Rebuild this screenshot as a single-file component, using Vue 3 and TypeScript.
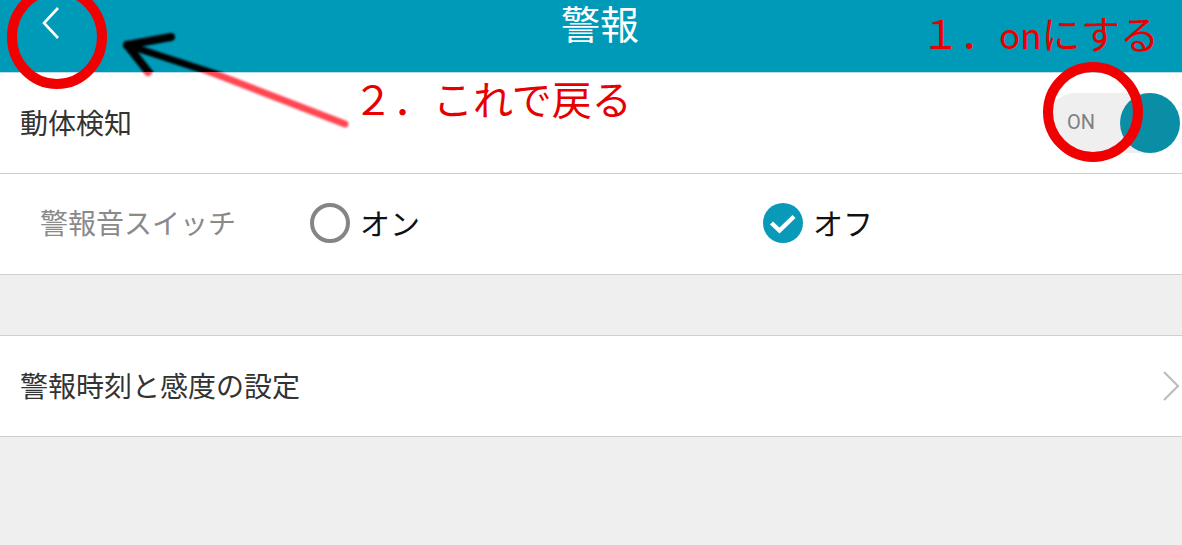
<script setup lang="ts">
const rows = { alarm: '警報音スイッチ' }
</script>

<template>
  <div class="page">
    <header class="bar">
      <svg class="back" width="22" height="34" viewBox="0 0 22 34">
        <path d="M18 2 L4 17 L18 32" fill="none" stroke="#fff" stroke-width="2.6" />
      </svg>
      <h1 class="title">警報</h1>
    </header>

    <section class="row first">
      <span class="label">動体検知</span>
      <div class="toggle">
        <span class="track">ON</span>
        <span class="knob"></span>
      </div>
    </section>

    <section class="row sound">
      <span class="sub">{{ rows.alarm }}</span>
      <div class="options">
        <label class="option">
          <span class="radio"></span>
          <span class="opt-text">オン</span>
        </label>
        <label class="option">
          <svg class="checked" width="40" height="40" viewBox="0 0 40 40">
            <circle cx="20" cy="20" r="20" fill="#0a9ab9" />
            <path d="M8.5 20 L16.5 27.5 L31 13.5" fill="none" stroke="#fff" stroke-width="4.4" />
          </svg>
          <span class="opt-text">オフ</span>
        </label>
      </div>
    </section>

    <section class="row link">
      <span class="label">警報時刻と感度の設定</span>
      <svg class="chev" width="20" height="32" viewBox="0 0 20 32">
        <path d="M3 2 L17 16 L3 30" fill="none" stroke="#bdbdbd" stroke-width="2.2" />
      </svg>
    </section>

    <!-- hand-drawn annotations laid over the screenshot -->
    <svg class="marks" width="1182" height="545" viewBox="0 0 1182 545">
      <defs>
        <filter id="soft" x="-10%" y="-30%" width="120%" height="160%">
          <feGaussianBlur stdDeviation="1" />
        </filter>
        <clipPath id="on-bar"><rect x="0" y="0" width="1182" height="72" /></clipPath>
        <clipPath id="below-bar"><rect x="0" y="72" width="1182" height="473" /></clipPath>
      </defs>
      <ellipse cx="57" cy="37" rx="45" ry="47" fill="none" stroke="#f00000" stroke-width="10" />
      <ellipse cx="1093" cy="112" rx="45" ry="45" fill="none" stroke="#f00000" stroke-width="10" />
      <g clip-path="url(#below-bar)">
        <g fill="none" stroke="#ff3040" stroke-linecap="round" filter="url(#soft)" opacity="0.9">
          <path d="M345 124 L200 68" stroke-width="7" />
          <path d="M140 62 L148 72" stroke-width="8" />
        </g>
      </g>
      <g clip-path="url(#on-bar)">
        <g fill="none" stroke="#050505" stroke-linecap="round" filter="url(#soft)">
          <path d="M222 76 L127 45" stroke-width="7" />
          <path d="M127 45 L171 37" stroke-width="8" />
          <path d="M127 45 L150 74" stroke-width="8" />
        </g>
      </g>
    </svg>
    <span class="note note-one">１．<span class="latin">on</span>にする</span>
    <span class="note note-two">２．これで戻る</span>
  </div>
</template>

<style>
html, body { margin: 0; background: #efefef; }
</style>

<style scoped>
.page {
  position: relative;
  width: 1182px;
  height: 545px;
  overflow: hidden;
  background: #efefef;
  font-family: "Noto Sans CJK JP", "Noto Sans", sans-serif;
}
.bar {
  height: 73px;
  box-sizing: border-box;
  padding-left: 18px;
  background: #009ab9;
  border-bottom: 1px solid #b8dfe8;
  position: relative;
  text-align: center;
}
.back { position: absolute; left: 40px; top: 6px; }
.title {
  margin: 0;
  color: #fff;
  font-size: 39px;
  font-weight: 400;
  line-height: 44px;
}
.row {
  background: #fff;
  height: 101px;
  box-sizing: border-box;
  border-bottom: 1px solid #cfcfcf;
  display: flex;
  align-items: center;
  padding: 0 0 0 20px;
  color: #333;
  font-size: 28px;
}
.first { justify-content: space-between; padding-right: 2px; }
.label { line-height: 40px; padding-bottom: 2px; }
.toggle { display: flex; align-items: center; position: relative; width: 134px; height: 60px; }
.track {
  position: absolute;
  left: 0;
  top: 0;
  width: 100px;
  height: 60px;
  padding-left: 21px;
  box-sizing: border-box;
  background: #efefef;
  border-radius: 30px 0 0 30px;
  color: #808080;
  font-family: Roboto, sans-serif;
  font-size: 20px;
  line-height: 58px;
}
.knob {
  position: absolute;
  left: 74px;
  top: 0;
  width: 60px;
  height: 60px;
  border-radius: 50%;
  background: #0a8ea6;
}
.sound { padding-left: 40px; }
.sub { width: 270px; color: #8a8a8a; font-size: 28px; flex: none; line-height: 40px; padding-bottom: 4px; }
.options { display: flex; flex: 1; padding-bottom: 2px; }
.option { display: flex; align-items: center; gap: 10px; color: #111; flex: none; font-size: 30px; }
.option:first-child { width: 453px; }
.opt-text { line-height: 40px; padding-bottom: 3px; }
.radio {
  width: 40px;
  height: 40px;
  box-sizing: border-box;
  border: 4px solid #858585;
  border-radius: 50%;
}
.link {
  justify-content: space-between;
  height: 102px;
  margin-top: 60px;
  padding-right: 1px;
  border-top: 1px solid #cfcfcf;
}
.marks { position: absolute; left: 0; top: 0; pointer-events: none; }
.note {
  position: absolute;
  color: #e60000;
  font-size: 39px;
  line-height: 44px;
  white-space: nowrap;
  font-weight: 400;
}
.latin { font-size: 35px; }
.note-one { left: 921px; top: 10px; }
.note-two { left: 353px; top: 76px; font-size: 40px; }
</style>
